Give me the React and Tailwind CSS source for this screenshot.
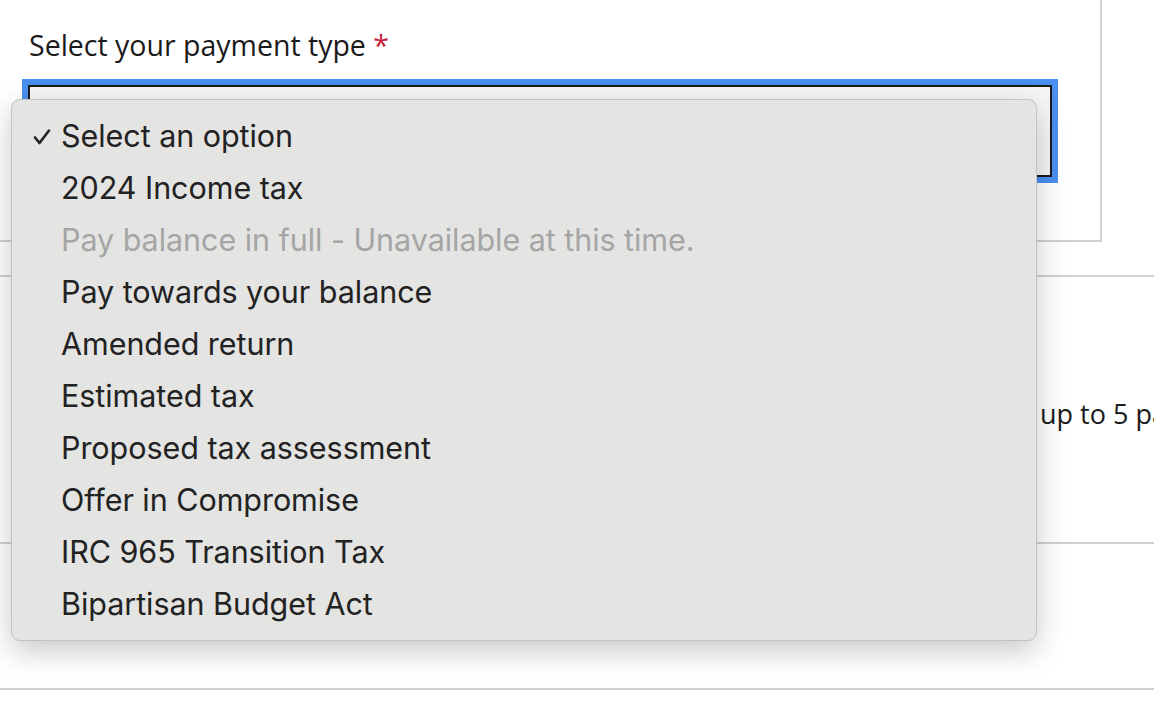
import React from "react";

const options = [
  { label: "Select an option", checked: true },
  { label: "2024 Income tax" },
  { label: "Pay balance in full - Unavailable at this time.", disabled: true },
  { label: "Pay towards your balance" },
  { label: "Amended return" },
  { label: "Estimated tax" },
  { label: "Proposed tax assessment" },
  { label: "Offer in Compromise" },
  { label: "IRC 965 Transition Tax" },
  { label: "Bipartisan Budget Act" },
];

const pageFont = { fontFamily: '"Open Sans", "Noto Sans", sans-serif' };
const menuFont = { fontFamily: 'Inter, "Liberation Sans", sans-serif' };

export default function App() {
  return (
    <div className="relative w-[1154px] h-[704px] bg-white overflow-hidden text-[#1b1b1b]" style={pageFont}>
      {/* form card */}
      <div className="w-[1102px] h-[243px] -mt-px border-r-2 border-b-2 border-[#d0d0d0] pl-[29px] pt-[26px]">
        <div className="text-[28.5px] leading-[40px]">
          Select your payment type <span className="text-[#c5203b]">*</span>
        </div>
        <div className="mt-[14px] -ml-[7px] w-[1036px] h-[104px] border-[6px] border-[#4a8ff0]">
          <div className="h-full border-2 border-[#1b1b1b] bg-[#f6f6f6]"></div>
        </div>
      </div>

      <div className="mt-[33px] border-t-2 border-[#d0d0d0] h-[267px] flex items-center">
        <p className="ml-[1040px] whitespace-nowrap text-[27px] mt-[10px]">up to 5 pay</p>
      </div>
      <div className="border-t-2 border-[#d0d0d0] h-[146px]"></div>
      <div className="border-t-2 border-[#d0d0d0]"></div>

      {/* native select popup */}
      <div
        className="absolute left-[11px] top-[99px] w-[1026px] rounded-[9px] bg-[#e4e4e3] border border-[#c3c3c3] py-[10px] shadow-[0_10px_30px_rgba(0,0,0,0.22)]"
        style={menuFont}
      >
        {options.map((o) => (
          <div key={o.label} className="flex items-center h-[52px] text-[30.5px] tracking-[-0.05px]">
            <span className="w-[49px] flex justify-end pr-[10px]">
              {o.checked && (
                <svg width="18" height="18" viewBox="0 0 18 18" className="mt-[2px]">
                  <path d="M2 9.5 L6.5 15 L16 2.5" fill="none" stroke="#222" strokeWidth="2.6" strokeLinecap="round" strokeLinejoin="round" />
                </svg>
              )}
            </span>
            <span className={o.disabled ? "text-[#a5a5a5]" : "text-[#222]"}>{o.label}</span>
          </div>
        ))}
      </div>
    </div>
  );
}
